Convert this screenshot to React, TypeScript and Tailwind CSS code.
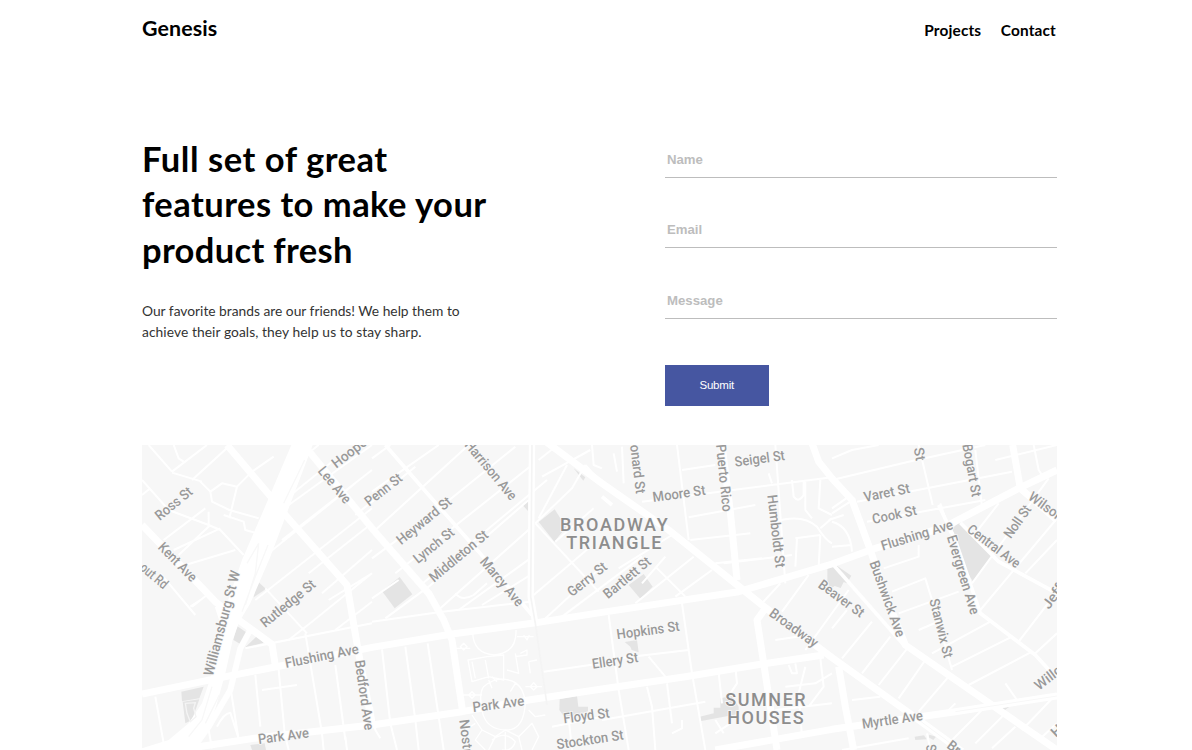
import React from "react";

type Label = [text: string, x1: number, y1: number, x2: number, y2: number];

const blocks = [
  "M345 422L372 447L335 472Z",
  "M285 558L320 582L300 615L274 600Z",
  "M345 588L365 608L310 622Z",
  "M118 755L185 740L172 775L120 784Z",
  "M122 785L172 778L150 840L130 850Z",
  "M325 915L368 910L372 930L330 930Z",
  "M720 453L773 411L811 463L758 505Z",
  "M1142 196L1158 178V213Z",
  "M1190 246L1238 208L1272 262L1237 305Z",
  "M1295 85L1330 112L1324 122Z",
  "M1253 778L1305 768L1309 800L1338 800V814L1270 835L1252 810Z",
  "M1460 435L1505 402L1532 440L1495 476Z",
  "M1448 606L1485 600L1490 637L1469 630L1465 620Z",
  "M1673 830L1715 820V803H1735V775L1770 768L1790 800V822L1674 844Z",
  "M2056 383L2085 377L2128 407L2115 430L2105 426L2096 444L2078 438L2066 446L2056 425Z",
  "M2430 268L2452 244L2552 344L2493 425L2478 400Z",
  "M2318 890L2346 886L2354 898L2320 900Z",
  "M2362 884L2382 890L2374 900L2360 892Z",
  "M2574 806L2602 800L2586 812Z",
];

const hairlines = [
  "M0 165L25 145M90 95L195 15M90 95L20 15M0 120L80 210L200 255L235 270L305 345M90 98L180 125M150 120L265 15M65 300L190 205M110 345L205 255M95 330L235 265M130 375L280 330M150 500L195 465M55 400L160 525M175 480L145 500",
  "M175 125L205 155L240 130L285 140L330 95L395 50M205 155L210 185L262 210L350 235M285 140L262 235M245 225L305 245L310 270L345 280M200 255V215M95 15L110 55L125 65",
  "M410 110L530 15M440 170L570 65M440 195L690 15M420 300L690 90M385 335L640 130M340 480L690 205M370 445L495 580M500 400L690 250M540 460L690 330M560 480L690 400M440 600L510 545L690 400M580 570L690 485",
  "M310 625L690 550M340 705L355 860M360 750L465 735M490 580L540 880M580 675L610 900M265 740L290 900M40 770L65 910M225 860Q245 820 265 818L290 895M200 870L210 925M410 690L430 900M540 880L545 930M610 890L615 930M430 890L440 930",
  "M690 55L745 15M690 155L890 15M700 270L980 15M640 225L820 80M690 355L860 230L1120 20M760 400L1170 75M830 440L1215 120M690 475L770 420M730 535L860 440L1160 180M895 505L1165 265M950 510L1165 355M1020 495L1165 405",
  "M690 545L900 515L1165 485M940 460Q960 485 995 465L1035 430M720 628L745 850M790 620L820 840M857 610L890 830M745 850L765 930M820 840L830 930M890 830L905 930M690 800L700 870L715 895",
  "M1180 250L1310 390L1370 455M1240 305L1355 205M1175 465L1340 325M1205 540L1390 370M1260 530L1500 350M1180 250L1290 145L1330 75M1190 235L1275 75M1190 60L1240 20M1330 75L1390 140M1350 15L1355 75L1380 85M1200 110L1345 30",
  "M1205 695L1380 670M1230 860L1380 830M1280 835L1290 930M1400 525L1430 750M1380 840L1690 785M1430 750L1460 930M1620 490L1650 700M1650 700L1690 930M1430 655L1640 630M1520 650L1570 710M1515 740L1530 800L1540 930M1575 730L1590 850M1590 880L1620 865V840M1720 880L1765 850M1745 880L1720 840",
  "M1605 15L1640 300M1645 300L1825 280M1620 90L1720 75M1640 232L1840 195M1720 370L1860 355M1440 20L1445 130M1415 40L1425 95M1500 185L2070 112M1745 370L1950 345M1900 15L1930 430M1600 470L1710 390M1540 380L1630 470M1480 490L1655 350M1430 385L1590 285M1500 430L1570 350",
  "M1880 100L1890 130M1950 120L1955 170Q1970 190 1985 165V120M1990 125V210L2010 235M2035 120L2030 205L2070 225M1900 245Q1980 220 2025 260Q2050 300 2070 310M2035 265L2070 235M1960 295L2035 285M1965 295L1960 380M2035 285L2030 380M1860 490L1915 430M1920 515L2000 405M1990 630L2120 450M1900 600L2000 585",
  "M1730 700L1740 790M1780 680L1785 730L1765 760M1940 675L1950 700H1965L1960 670M1930 740L2020 730L2070 700M1990 680L1970 760L1980 890M2035 655L2045 740L2000 800M1900 810L2070 790",
  "M2070 55L2130 30L2210 15M2070 120L2300 65L2530 15M2145 185L2610 95M2175 245L2530 180M2330 15L2372 195M2395 190L2425 280M2500 30L2520 200M2675 15L2690 90L2700 105M2560 60L2745 15",
  "M2070 220L2140 175M2070 205L2120 170M2060 240L2105 225M2070 245Q2125 260 2130 335M2070 320L2130 315M2225 385L2330 350V315M2250 455L2350 415L2370 480L2430 690M2270 520L2450 455M2330 570L2400 540M2370 640L2545 545M2430 680L2610 590M2480 735L2670 635",
  "M2490 430L2720 115M2515 510L2745 235M2630 605L2745 455M2650 400L2745 300M2680 640L2745 580M2500 280L2570 190M2590 730L2625 780M2100 655L2190 545M2160 700L2245 590M2210 735L2300 620M2270 775L2350 660M2330 815L2420 710M2400 830L2440 790M2420 910L2530 800M2500 910L2590 820M2550 925L2620 860M2640 870L2745 760M2690 900L2745 850M2130 780L2215 770M2100 930L2300 895M2355 880L2362 915M2070 565L2115 510",
];

const estate = [
  "M992 580Q995 640 1055 645Q1125 640 1122 570M940 625H985M955 620L965 610L975 620L965 630ZM1125 590H1175M1145 585L1155 600L1162 585M978 660L1035 650L1085 645V720L1040 710L990 725ZM990 665L1000 715M1030 660L1040 715M1120 640L1130 700L1095 690M1135 640L1155 630V645L1120 650M1160 665L1185 660M1160 665L1165 700",
  "M1025 740Q1060 710 1100 720Q1145 730 1150 790Q1145 870 1095 870Q1030 870 1020 810Q1010 760 1025 740ZM1050 710L1065 725M1040 720L1050 745M1120 730L1105 755M960 765H1020M980 765L990 755L1000 765L990 775ZM1150 740H1200M1165 740L1175 728L1185 740L1175 750Z",
  "M990 825L1020 870L1000 900L1030 930M1020 870L1060 890L1040 930M1060 890L1090 870L1130 890L1140 930M1130 890L1170 850L1190 890L1170 930M1090 875V930M1160 810L1180 830L1210 825M1000 850L970 870M1050 900Q1090 870 1120 905Q1110 935 1080 930",
];

const streets = [
  "M730 15L860 165L1010 335L1170 525",
  "M2070 370L2290 620",
  "M2390 195L2440 300L2515 520L2680 645L2730 700",
  "M2455 248L2570 365L2745 460",
  "M1380 170L1410 195",
];

const avenues = [
  "M255 15L395 180L430 225L615 435L650 640L690 850",
  "M0 255L220 485L290 540L390 613L402 690",
  "M0 762L240 712L430 675L690 622L930 582L1170 550L1380 517L1790 455L2070 372L2200 325L2410 260L2630 145L2745 90",
  "M490 20L690 265L860 460L905 540L930 600L962 815",
  "M140 925L350 893L690 855L960 815L1160 780L1380 747L1630 710L1860 672L2045 645",
  "M1205 0L1380 130L1580 270L1860 495L2070 653L2310 825L2460 935",
  "M1740 15L1765 215L1785 420",
  "M2010 10L2030 65L2070 115L2130 180L2185 330L2225 450L2290 615L2470 740L2745 930",
  "M1870 505L1845 540L1865 670L1905 930",
  "M1720 930L2070 868L2440 815L2745 768",
  "M2612 15L2635 145L2745 240",
  "M2090 680L2110 800L2135 930",
];

const labels: Label[] = [
  ["Ross St", 53, 243, 155, 160],
  ["Kent Ave", 46, 324, 148, 428],
  ["out Rd", -9, 388, 64, 449],
  ["Williamsburg St W", 212, 710, 295, 396],
  ["Rutledge St", 370, 564, 524, 438],
  ["Flushing Ave", 432, 684, 652, 640],
  ["Bedford Ave", 638, 662, 668, 872],
  ["Park Ave", 350, 912, 502, 892],
  ["Lee Ave", 526, 94, 608, 194],
  ["Hoope", 583, 86, 678, 12],
  ["Penn St", 682, 200, 784, 120],
  ["Harrison Ave", 966, 16, 1106, 184],
  ["Heyward St", 778, 316, 932, 190],
  ["Lynch St", 828, 372, 940, 282],
  ["Middleton St", 876, 428, 1042, 290],
  ["Marcy Ave", 1012, 366, 1126, 502],
  ["Park Ave", 994, 816, 1148, 796],
  ["Nostr", 952, 840, 964, 942],
  ["Gerry St", 1290, 472, 1398, 386],
  ["Bartlett St", 1398, 478, 1530, 370],
  ["Ellery St", 1352, 686, 1490, 666],
  ["Hopkins St", 1426, 598, 1614, 572],
  ["Floyd St", 1266, 850, 1404, 832],
  ["Stockton St", 1246, 928, 1446, 898],
  ["onard St", 1464, 16, 1482, 162],
  ["Moore St", 1534, 186, 1692, 164],
  ["Puerto Rico", 1722, 14, 1742, 216],
  ["Seigel St", 1780, 80, 1930, 60],
  ["Humboldt St", 1876, 166, 1901, 384],
  ["Broadway", 1879, 526, 2016, 624],
  ["e St", 2310, -8, 2322, 64],
  ["Bogart St", 2461, 14, 2490, 172],
  ["Varet St", 2168, 186, 2306, 158],
  ["Cook St", 2194, 252, 2326, 224],
  ["Flushing Ave", 2222, 332, 2436, 266],
  ["Central Ave", 2473, 274, 2622, 386],
  ["Noll St", 2606, 298, 2670, 208],
  ["Wilson", 2656, 176, 2752, 246],
  ["Evergreen Ave", 2414, 290, 2486, 526],
  ["Bushwick Ave", 2182, 368, 2264, 594],
  ["Beaver St", 2026, 440, 2154, 534],
  ["Stanwix St", 2362, 480, 2406, 656],
  ["Jeff", 2721, 510, 2768, 446],
  ["Willo", 2691, 752, 2764, 696],
  ["Myrtle Ave", 2162, 866, 2344, 840],
  ["Bro", 2412, 922, 2460, 958],
  ["St", 2351, 916, 2357, 950],
  ["H", 2742, 894, 2766, 872],
];

const areas: [string, number, number, number][] = [
  ["BROADWAY", 1254, 274, 323],
  ["TRIANGLE", 1273, 326, 285],
  ["SUMNER", 1750, 798, 241],
  ["HOUSES", 1756, 851, 229],
];

function StreetLabel({ label }: { label: Label }) {
  const [text, x1, y1, x2, y2] = label;
  const angle = (Math.atan2(y2 - y1, x2 - x1) * 180) / Math.PI;
  return (
    <text
      transform={`translate(${x1} ${y1}) rotate(${angle})`}
      textLength={Math.hypot(x2 - x1, y2 - y1)}
      lengthAdjust="spacingAndGlyphs"
    >
      {text}
    </text>
  );
}

function StreetMap() {
  return (
    <svg viewBox="0 15 2745 915" className="block h-[305px] w-[915px] shrink-0 bg-[#f7f7f7]" aria-label="Map">
      {blocks.map((d) => (
        <path key={d} d={d} fill="#e4e4e4" />
      ))}
      <g fill="none" stroke="#fff" strokeLinejoin="round">
        {hairlines.map((d) => (
          <path key={d} d={d} strokeWidth="6" />
        ))}
        {estate.map((d) => (
          <path key={d} d={d} strokeWidth="4" />
        ))}
        {streets.map((d) => (
          <path key={d} d={d} strokeWidth="11" />
        ))}
        {avenues.map((d) => (
          <path key={d} d={d} strokeWidth="21" />
        ))}
        <path d="M1170 15L1166 470L1180 550" strokeWidth="19" />
        <path d="M1170 15L1166 470L1180 550L1215 795" stroke="#f4f4f4" strokeWidth="5" />
        <path d="M330 560L295 625L265 750L200 860L150 930" strokeWidth="18" />
      </g>
      <path
        d="M448 15L380 175L300 360L250 505L218 500L238 560L210 700L180 790L140 850L80 900L0 925V930H150L200 870L225 790L250 700L272 600L292 545L325 490L385 350L440 205L512 15Z"
        fill="#fff"
      />
      <g fill="none" stroke="#f8f8f8" strokeWidth="4">
        <path d="M488 60L425 190M378 315L338 415L300 515M315 370L350 310L340 400L310 495M210 740L180 840L140 890M232 765L190 850" />
        <path d="M2310 825L2460 935M2440 815L2745 768" strokeWidth="3" />
      </g>
      <path d="M130 790L160 788L155 805L162 830L145 845L135 820Z" fill="none" stroke="#f4f4f4" strokeWidth="4" />
      <g
        fill="#999"
        stroke="#f9f9f9"
        strokeWidth="5"
        strokeLinejoin="round"
        paintOrder="stroke"
        className="font-['Roboto',sans-serif] text-[42px] font-medium"
      >
        {labels.map((label) => (
          <StreetLabel key={`${label[0]}-${label[1]}`} label={label} />
        ))}
      </g>
      <g
        fill="#8d8d8d"
        stroke="#f9f9f9"
        strokeWidth="5"
        paintOrder="stroke"
        className="font-['Roboto',sans-serif] text-[54px] font-medium"
      >
        {areas.map(([text, x, y, length]) => (
          <text key={text} x={x} y={y} textLength={length}>
            {text}
          </text>
        ))}
      </g>
    </svg>
  );
}

function Field({ label }: { label: string }) {
  return (
    <input
      aria-label={label}
      placeholder={label}
      className="block h-[36px] w-full border-b border-[#bdbdbd] px-0.5 pb-[1px] font-['Liberation_Sans',sans-serif] text-[13.2px] font-bold outline-none placeholder:text-[#bdbdbd]"
    />
  );
}

export default function App() {
  return (
    <div className="flex h-[750px] flex-col overflow-hidden bg-white pl-[142px] font-['Lato',sans-serif] text-black">
      <header className="flex h-[60px] w-[915px] shrink-0 items-center justify-between">
        <a className="pb-1 text-[21.4px] leading-6 font-bold tracking-[0.1px]">Genesis</a>
        <nav className="flex gap-[19.5px] pr-px pb-px text-[15.4px] leading-5 font-bold tracking-[0.16px]">
          <a>Projects</a>
          <a>Contact</a>
        </nav>
      </header>
      <main className="flex w-[915px] flex-col">
        <section className="flex h-[385px] justify-between">
          <div className="pt-[76px]">
            <h1 className="flex flex-col text-[34.5px] leading-[45.3px] font-bold whitespace-nowrap">
              <span className="tracking-[0.54px]">Full set of great</span>
              <span className="tracking-[0.47px]">features to make your</span>
              <span className="tracking-[0.33px]">product fresh</span>
            </h1>
            <p className="mt-[28px] flex flex-col text-[13.8px] leading-[21.6px] whitespace-nowrap text-[#333]">
              <span className="tracking-[-0.01px]">Our favorite brands are our friends! We help them to</span>
              <span className="tracking-[0.075px]">achieve their goals, they help us to stay sharp.</span>
            </p>
          </div>
          <form className="flex w-[392px] flex-col pt-[82px]">
            <div className="flex flex-col">
              <Field label="Name" />
              <div className="mt-[34px]">
                <Field label="Email" />
              </div>
              <div className="mt-[35px]">
                <Field label="Message" />
              </div>
            </div>
            <button
              type="button"
              className="mt-[46px] h-[41px] w-[103.5px] bg-[#4656a1] font-['Liberation_Sans',sans-serif] text-[11.5px] tracking-[-0.2px] text-white"
            >
              Submit
            </button>
          </form>
        </section>
        <StreetMap />
      </main>
    </div>
  );
}
